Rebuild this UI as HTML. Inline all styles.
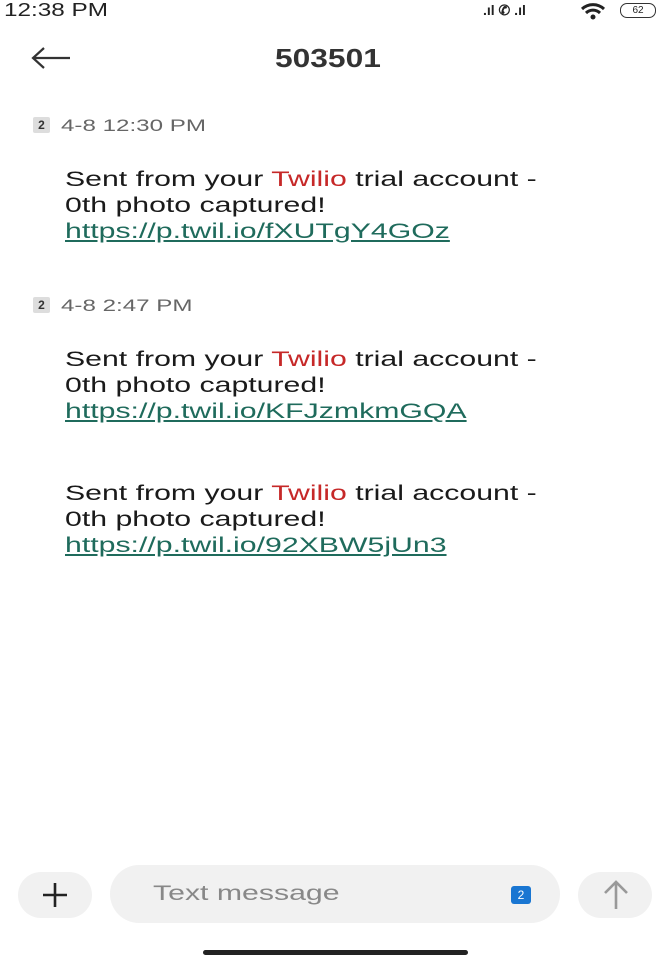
<!DOCTYPE html>
<html><head><meta charset="utf-8"><style>
body{margin:0;width:664px;height:960px;background:#fff;font-family:"Liberation Sans",sans-serif;position:relative;overflow:hidden;color:#222}
.a{position:absolute}
.w{transform-origin:left top;white-space:nowrap}
.msg{position:absolute;left:65px;font-size:21px;line-height:26px;color:#1a1a1a;transform:scaleX(1.44)}
.msg .r{color:#c62828}
.msg a{color:#1f6b5c;text-decoration:underline}
.ts{position:absolute;left:61px;font-size:17px;color:#666;transform:scaleX(1.42)}
.bd{position:absolute;left:33px;background:#ddd;color:#333;font-size:12px;font-weight:bold;width:17px;height:16px;line-height:16px;text-align:center;border-radius:2px}
</style></head><body>
<div class="a w" style="left:4px;top:0;font-size:18px;color:#222;transform:scaleX(1.35)">12:38 PM</div>
<div class="a" style="left:483px;top:2px;font-size:14px;color:#222;font-weight:bold">.ıl ✆ .ıl</div>
<svg class="a" style="left:580px;top:2px" width="26" height="18" viewBox="0 0 26 18"><path d="M2 7a16 16 0 0 1 22 0M6 11a10 10 0 0 1 14 0" stroke="#222" stroke-width="3" fill="none"/><circle cx="13" cy="15" r="2.5" fill="#222"/></svg>
<div class="a" style="left:620px;top:3px;width:34px;height:13px;border:1px solid #333;border-radius:7px;font-size:10px;text-align:center;line-height:13px">62</div>
<svg class="a" style="left:30px;top:46px" width="42" height="24" viewBox="0 0 42 24"><path d="M40 12H3M14 2L3 12l11 10" stroke="#333" stroke-width="2.2" fill="none"/></svg>
<div class="a w" style="left:275px;top:43px;font-size:26px;color:#333;font-weight:bold;transform:scaleX(1.22)">503501</div>
<div class="bd" style="top:117px">2</div><div class="ts w" style="top:116px">4-8 12:30 PM</div>
<div class="msg w" style="top:167px">Sent from your <span class="r">Twilio</span> trial account -<br>0th photo captured!<br><a>https://p.twil.io/fXUTgY4GOz</a></div>
<div class="bd" style="top:297px">2</div><div class="ts w" style="top:296px">4-8 2:47 PM</div>
<div class="msg w" style="top:347px">Sent from your <span class="r">Twilio</span> trial account -<br>0th photo captured!<br><a>https://p.twil.io/KFJzmkmGQA</a></div>
<div class="msg w" style="top:481px">Sent from your <span class="r">Twilio</span> trial account -<br>0th photo captured!<br><a>https://p.twil.io/92XBW5jUn3</a></div>
<div class="a" style="left:18px;top:872px;width:74px;height:46px;border-radius:23px;background:#f1f1f1"></div>
<svg class="a" style="left:39px;top:880px" width="32" height="30"><path d="M16 3v24M4 15h24" stroke="#222" stroke-width="2.6"/></svg>
<div class="a" style="left:110px;top:865px;width:450px;height:58px;border-radius:29px;background:#f1f1f1"></div>
<div class="a w" style="left:153px;top:882px;font-size:21px;color:#888;transform:scaleX(1.44)">Text message</div>
<div class="a" style="left:511px;top:886px;width:20px;height:18px;background:#1976d2;border-radius:3px;color:#fff;font-size:12px;text-align:center;line-height:18px">2</div>
<div class="a" style="left:578px;top:872px;width:74px;height:46px;border-radius:23px;background:#f1f1f1"></div>
<svg class="a" style="left:600px;top:878px" width="32" height="34"><path d="M16 31V4M5 15L16 4l11 11" stroke="#999" stroke-width="2.6" fill="none"/></svg>
<div class="a" style="left:203px;top:950px;width:265px;height:5px;border-radius:3px;background:#222"></div>
</body></html>
